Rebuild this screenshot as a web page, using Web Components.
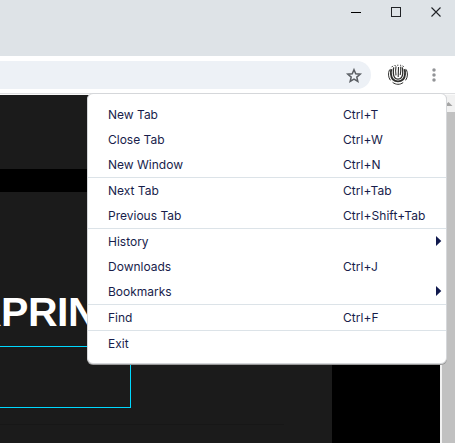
<!DOCTYPE html>
<html lang="en"><head><meta charset="utf-8"><title>Browser menu</title>
<style>html,body{margin:0;height:443px;overflow:hidden;background:#fff}body{font-family:Inter,"Liberation Sans",sans-serif}</style></head>
<body>
<browser-window></browser-window>
<script>
const define = (name, html) => customElements.define(name, class extends HTMLElement {
  constructor() { super(); this.attachShadow({mode: 'open'}).innerHTML = html; }
});
define('window-bar', `<style>
:host{display:flex;height:56px;background:#dee3e7;justify-content:flex-end}
svg{display:block;width:119px;height:24px}</style>
<svg viewBox="336 0 119 24" fill="none" stroke="#202226"><path d="M351 12.5h10" stroke="#000"/><rect x="391.5" y="7.5" width="9" height="9"/><path d="M431.5 7.5l9 9m0-9l-9 9" stroke-width="1.1"/></svg>`);
define('tool-bar', `<style>
:host{display:grid;grid-template-columns:371px 54px 30px;box-sizing:border-box;padding:5px 0 4px;background:#fff;border-bottom:1px solid #dedfe1;height:38px}
.url{background:#edf1f6;border-radius:0 14px 14px 0;height:28px;display:flex;justify-content:flex-end}
svg{display:block}</style>
<div class="url"><svg width="34" height="28" viewBox="337 61 34 28"><path d="M354 69.7l1.75 4.1 4.45.4-3.4 2.9 1.05 4.4-3.85-2.3-3.85 2.3 1.05-4.4-3.4-2.9 4.45-.4z" fill="none" stroke="#5a5e63" stroke-width="1.5"/></svg></div>
<svg width="54" height="28" viewBox="371 61 54 28" fill="none" stroke="#30302e">
<path d="M389.6 69.6c-1.7 3.6-1.4 7.6.8 10.7M392.6 82.3c3.2 2.6 7.4 2.7 10.6.2M405.6 80.3c2.2-3.2 2.4-7.2.7-10.8" stroke-width="1"/>
<path d="M391.4 69.2c-.6 1.6-.6 3.3-.4 5.2.4 4.3 3 7 7 7 4.100 0 6.600-2.700 7-7 .2-1.900 .1-3.600-.5-5.200" stroke-width="1.9"/>
<path d="M393.700 67.400c-.5 2-.5 4-.3 6.400.3 3.500 1.800 5.400 4.600 5.400s4.400-1.900 4.700-5.400c.2-2.400.1-4.400-.4-6.400" stroke-width="1.3"/>
<path d="M396 66.400c-.5 2.500-.5 5.500 0 9M398.500 67l-.3 10M400.700 66.600c.2 3 .1 5.800-.5 8.400" stroke-width="1.1"/>
<path d="M391.600 67.200l1.300-1.300M394.800 66l.5-1M397.800 65.800v-1.100M400.700 65.800l-.2-1M403.600 66.900l-.9-1.200" stroke-width="1"/></svg>
<svg width="30" height="28" viewBox="425 61 30 28" fill="#929497"><circle cx="434" cy="70" r="1.75"/><circle cx="434" cy="75" r="1.75"/><circle cx="434" cy="80" r="1.75"/></svg>`);
define('scroll-bar', `<style>
:host{display:block;background:#c1c1c1}
div{height:17px;background:#f1f1f1}svg{display:block}</style>
<div><svg width="13" height="17"><path d="M2.500 11L6.500 7l4 4z" fill="#a3a3a3"/></svg></div>`);
define('page-view', `<style>
:host{display:grid;grid-template-columns:332px 108px 2px 13px;height:348px;border-top:1px solid #fafafa;background:#000}
.main{display:flow-root;background:#1b1b1b;overflow:hidden}
.band{height:23px;margin-top:74px;background:#000}
h1{margin:97px 0 0 -28px;font:bold 41px/46px "Liberation Sans",sans-serif;letter-spacing:-.5px;color:#fff;white-space:nowrap}
.box{box-sizing:border-box;width:131px;height:62px;margin-top:11px;border:1px solid #00d8ff;border-left:0}
.rule{width:284px;height:1px;margin-top:16px;background:#171717}
.edge{background:#f1f1f1}</style>
<div class="main"><div class="band"></div><h1>RPRIN</h1><div class="box"></div><div class="rule"></div></div>
<div></div><div class="edge"></div><scroll-bar></scroll-bar>`);
define('menu-group', `<style>:host{display:block;border-top:1px solid #dce3e8}:host(:first-of-type){border-top:0}</style><slot></slot>`);
customElements.define('menu-item', class extends HTMLElement {
  constructor() {
    super();
    this.attachShadow({mode: 'open'}).innerHTML = `<style>
:host{display:grid;grid-template-columns:235px 93px 6px;height:25px;padding-left:20px;align-items:center;font-size:12px;line-height:25px;color:#181d4b;white-space:nowrap}
.key{letter-spacing:.05px}
svg{display:none;margin-top:-2px}:host([sub]) svg{display:block}</style>
<span><slot></slot></span><span class="key">${this.getAttribute('key') || ''}</span><svg width="6" height="10"><path d="M0 0l5.300 5L0 10z" fill="#10194d"/></svg>`;
  }
});
define('drop-menu', `<style>
:host{display:block;box-sizing:border-box;width:360px;height:271px;padding-top:8px;background:#fff;border:1px solid #d5d7da;border-radius:6px;box-shadow:0 1px 0 #999}</style>
<menu-group><menu-item key="Ctrl+T">New Tab</menu-item><menu-item key="Ctrl+W">Close Tab</menu-item><menu-item key="Ctrl+N">New Window</menu-item></menu-group>
<menu-group><menu-item key="Ctrl+Tab">Next Tab</menu-item><menu-item key="Ctrl+Shift+Tab">Previous Tab</menu-item></menu-group>
<menu-group><menu-item sub>History</menu-item><menu-item key="Ctrl+J">Downloads</menu-item><menu-item sub>Bookmarks</menu-item></menu-group>
<menu-group><menu-item key="Ctrl+F">Find</menu-item></menu-group>
<menu-group><menu-item>Exit</menu-item></menu-group>`);
define('browser-window', `<style>
:host{display:block;position:relative;width:455px;height:443px;overflow:hidden}
drop-menu{position:absolute;left:87px;top:93px}</style>
<window-bar></window-bar><tool-bar></tool-bar><page-view></page-view><drop-menu></drop-menu>`);
</script></body></html>
